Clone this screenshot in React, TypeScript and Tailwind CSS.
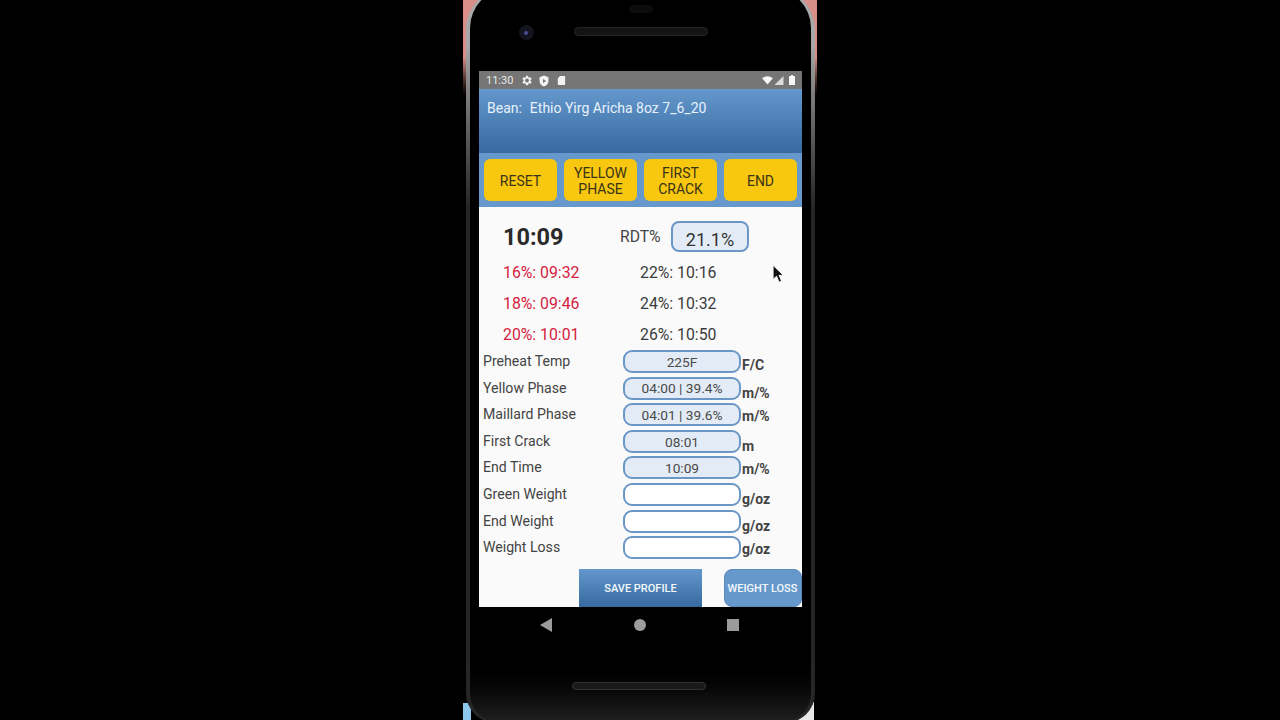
import React from "react";

const tops = [
  { l: "16%: 09:32", r: "22%: 10:16" },
  { l: "18%: 09:46", r: "24%: 10:32" },
  { l: "20%: 10:01", r: "26%: 10:50" },
];

const rows = [
  { label: "Preheat Temp", value: "225F", unit: "F/C", u: "mt-[9px]" },
  { label: "Yellow Phase", value: "04:00 | 39.4%", unit: "m/%", u: "mt-[10px]" },
  { label: "Maillard Phase", value: "04:01 | 39.6%", unit: "m/%", u: "mt-[7px]" },
  { label: "First Crack", value: "08:01", unit: "m", u: "mt-[10px]" },
  { label: "End Time", value: "10:09", unit: "m/%", u: "mt-[7px]" },
  { label: "Green Weight", value: "", unit: "g/oz", u: "mt-[10px]" },
  { label: "End Weight", value: "", unit: "g/oz", u: "mt-[10px]" },
  { label: "Weight Loss", value: "", unit: "g/oz", u: "mt-[7px]" },
];

function YellowButton({ children }: { children: React.ReactNode }) {
  return (
    <div className="flex h-[42px] flex-1 items-center justify-center rounded-[6px] bg-[#f8c70f] pt-[1px] text-center text-[14px] leading-[16px] text-[#3a3418]">
      {children}
    </div>
  );
}

export default function App() {
  return (
    <div
      className="flex h-[720px] w-[1280px] justify-center overflow-hidden bg-black"
      style={{ fontFamily: "Roboto, sans-serif" }}
    >
      <div className="relative h-[720px] w-[354px] overflow-hidden bg-gradient-to-b from-[#d98f88] from-[8%] to-black to-[14%]">
        <div className="absolute bottom-0 left-0 h-[17px] w-[8px] bg-[#8cc8ee]" />
        <div className="absolute bottom-0 right-[3px] h-[18px] w-[18px] bg-[#e8e8e8]" />
        {/* phone body, its top and bottom run past the photo */}
        <div className="absolute bottom-[-3px] left-[3px] right-[2px] top-[-14px] rounded-b-[30px] rounded-t-[44px] bg-gradient-to-b from-[#a8a8a8] from-[8%] via-[#262626] via-[30%] to-[#262626] px-[4px] pb-[1px] pt-[2px]">
          <div className="flex h-full flex-col items-center rounded-b-[28px] rounded-t-[40px] bg-gradient-to-b from-black from-[90%] to-[#202020]">
            <div className="absolute top-[19px] h-[8px] w-[24px] rounded-full bg-[#0c0c0c]" />
            {/* speaker row */}
            <div className="relative mt-[39px] h-[9px] w-[134px] rounded-full border border-[#242424] bg-[#141414]">
              <div className="absolute left-[-56px] top-[-3px] flex h-[15px] w-[15px] items-center justify-center rounded-full bg-[#14141f]">
                <div className="h-[4px] w-[4px] rounded-full bg-[#4a4a9a]" />
              </div>
            </div>

            {/* screen */}
            <div className="mt-[35px] flex h-[536px] w-[323px] shrink-0 flex-col bg-[#fafafa]">
              <div className="flex h-[18px] shrink-0 items-center bg-[#757575] pl-[7px] pr-[7px] text-[11px] text-[#e8e8e8]">
                <span className="w-[33px] pt-[2px]">11:30</span>
                <svg viewBox="0 0 24 24" className="ml-[1px] mt-[1px] h-[13px] w-[13px]" fill="#f2f2f2">
                  <path d="M19.4 13a7.500 7.500 0 0 0 0-2l2.100-1.600-2-3.500-2.500 1a7.600 7.600 0 0 0-1.700-1L15 3.300h-4l-.4 2.600a7.600 7.600 0 0 0-1.700 1l-2.500-1-2 3.500L6.600 11a7.500 7.500 0 0 0 0 2l-2.200 1.600 2 3.500 2.500-1a7.600 7.600 0 0 0 1.700 1l.4 2.600h4l.4-2.600a7.600 7.600 0 0 0 1.700-1l2.500 1 2-3.500zM13 15.500a3.500 3.500 0 1 1 0-7 3.500 3.500 0 0 1 0 7z" />
                </svg>
                <svg viewBox="0 0 24 24" className="ml-[5px] mt-[1px] h-[12px] w-[12px]" fill="#f2f2f2">
                  <path d="M12 1 3 4.500v7c0 5.500 3.800 10 9 11.500 5.200-1.500 9-6 9-11.500v-7zM10 8l6 4-6 4z" />
                </svg>
                <svg viewBox="0 0 24 24" className="ml-[6px] mt-[1px] h-[11px] w-[11px]" fill="#f2f2f2">
                  <path d="M9 2h9a2 2 0 0 1 2 2v16a2 2 0 0 1-2 2H6a2 2 0 0 1-2-2V7z" />
                </svg>
                <div className="flex-1" />
                <svg viewBox="0 0 24 20" className="h-[9px] w-[11px]" fill="#f8f8f8">
                  <path d="M12 19 0 5c7-6 17-6 24 0z" />
                </svg>
                <svg viewBox="0 0 20 20" className="ml-[1px] h-[9px] w-[10px]" fill="#dcdcdc">
                  <path d="M20 0v20H0z" />
                </svg>
                <svg viewBox="0 0 12 20" className="ml-[5px] h-[10px] w-[6px]" fill="#f8f8f8">
                  <path d="M4 0h4v2h3a1 1 0 0 1 1 1v16a1 1 0 0 1-1 1H1a1 1 0 0 1-1-1V3a1 1 0 0 1 1-1h3z" />
                </svg>
              </div>

              <div className="h-[64px] shrink-0 bg-gradient-to-b from-[#6498cd] to-[#376b9f] pl-[8px] pt-[11px] text-[14px] leading-[17px] text-[#e8f1fb]">
                Bean:&nbsp; <span className="ml-[1px]">Ethio Yirg Aricha 8oz 7_6_20</span>
              </div>

              <div className="flex h-[54px] shrink-0 items-center gap-[7px] bg-[#6698cc] px-[5px]">
                <YellowButton>RESET</YellowButton>
                <YellowButton>YELLOW<br />PHASE</YellowButton>
                <YellowButton>FIRST<br />CRACK</YellowButton>
                <YellowButton>END</YellowButton>
              </div>

              <div className="relative flex-1">
                <div className="flex h-[44px] items-start pl-[24px] pt-[14px]">
                  <span className="w-[117px] text-[23.5px] font-bold leading-[32px] text-[#2a2a2a]">10:09</span>
                  <span className="mt-[7px] w-[51px] text-[15.7px] leading-[18px] text-[#444]">RDT%</span>
                  <div className="flex h-[31px] w-[78px] items-center justify-center rounded-[8px] border-2 border-[#6b97c6] bg-[#e3ecf6] pt-[5px] text-[18px] text-[#333]">
                    21.1%
                  </div>
                </div>
                <div className="mt-[6px] flex flex-col">
                  {tops.map((t) => (
                    <div key={t.l} className="flex h-[31px] items-center pl-[24px] text-[15.8px]">
                      <span className="w-[137px] text-[#d5213f]">{t.l}</span>
                      <span className="text-[#3a3a3a]">{t.r}</span>
                    </div>
                  ))}
                </div>
                <div className="-mt-[1px] flex flex-col pl-[4px]">
                  {rows.map((r) => (
                    <div key={r.label} className="flex h-[26.6px] items-start">
                      <span className="mt-[4px] w-[140px] text-[14.1px] leading-[16px] text-[#444]">{r.label}</span>
                      <div
                        className={
                          r.value
                            ? "mt-[1px] flex h-[23px] w-[118px] items-center justify-center rounded-[9px] border-2 border-[#6b97c6] bg-[#e3ecf6] pt-[1px] text-[13.7px] text-[#4a4a4a]"
                            : "mt-[1px] h-[23px] w-[118px] rounded-[9px] border-2 border-[#6b97c6] bg-white"
                        }
                      >
                        {r.value}
                      </div>
                      <span className={`ml-[1px] text-[14px] font-bold leading-[15px] text-[#444] ${r.u}`}>{r.unit}</span>
                    </div>
                  ))}
                </div>
                <div className="absolute bottom-0 left-[100px] flex h-[38px] w-[123px] items-center justify-center bg-gradient-to-b from-[#6498cd] to-[#376b9f] pt-[2px] text-[11px] font-medium text-[#f4f8fc]">
                  SAVE PROFILE
                </div>
                <div className="absolute bottom-0 right-0 flex h-[38px] w-[78px] items-center justify-center rounded-[8px] border border-[#5a8abd] bg-[#6698cc] pr-[1px] pt-[2px] text-[11px] font-medium text-[#f4f8fc]">
                  WEIGHT LOSS
                </div>
                {/* mouse cursor */}
                <svg viewBox="0 0 12 18" className="absolute left-[293px] top-[57px] h-[20px] w-[13px]">
                  <path d="M1 1v13l3.200-3 2.300 5.500 2.300-1-2.300-5.300H10.500z" fill="#111" stroke="#fff" strokeWidth="0.8" />
                </svg>
              </div>
            </div>

            {/* nav bar */}
            <div className="mr-[2px] mt-[11px] flex w-[199px] items-center justify-between">
              <svg viewBox="0 0 12 14" className="h-[14px] w-[12px]" fill="#9b9b9b"><path d="M12 0v14L0 7z" /></svg>
              <div className="h-[12px] w-[12px] rounded-full bg-[#9b9b9b]" />
              <div className="h-[12px] w-[12px] bg-[#9b9b9b]" />
            </div>
            <div className="mr-[4px] mt-[50px] h-[8px] w-[134px] rounded-full border border-[#333] bg-[#1a1a1a]" />
          </div>
        </div>
      </div>
    </div>
  );
}
